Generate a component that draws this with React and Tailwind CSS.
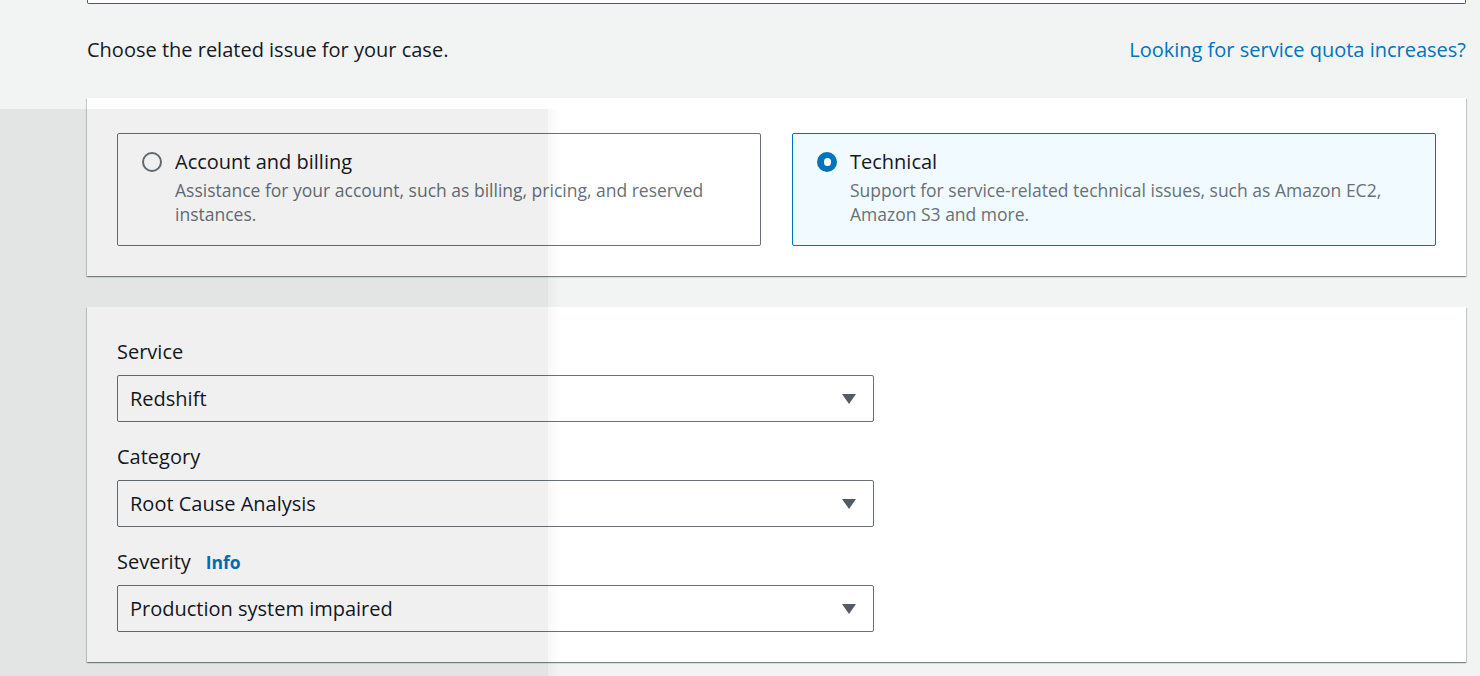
import React, { useState } from 'react';

const fontStack = { fontFamily: '"Open Sans", "Noto Sans", Arial, sans-serif' };

const Arrow = () => (
  <svg width="16" height="12" viewBox="0 0 16 12" className="shrink-0">
    <path d="M1 1 L15 1 L8 11 Z" fill="#545b64" />
  </svg>
);

const SelectBox = ({ value }) => (
  <div className="flex items-center justify-between w-[757px] h-[47px] border border-[#687078] rounded-[2px] bg-white pl-[12px] pr-[16px]">
    <span className="text-[20px] text-[#16191f]">{value}</span>
    <Arrow />
  </div>
);

const Tile = ({ checked, title, desc, onClick }) => (
  <div
    onClick={onClick}
    className={
      checked
        ? "flex-1 border border-[#0073bb] bg-[#f1faff] rounded-[2px] px-[24px] pt-[16px] pb-[19px] cursor-pointer"
        : "flex-1 border border-[#687078] bg-white rounded-[2px] px-[24px] pt-[16px] pb-[19px] cursor-pointer"
    }
  >
    <div className="flex gap-[13px]">
      <div className="h-[24px] flex items-center">
        {checked ? (
          <div className="w-[20px] h-[20px] rounded-full bg-[#0073bb] flex items-center justify-center">
            <div className="w-[7px] h-[8px] rounded-full bg-white"></div>
          </div>
        ) : (
          <div className="w-[20px] h-[20px] rounded-full border-2 border-[#687078] bg-white"></div>
        )}
      </div>
      <div>
        <div className="text-[20px] leading-[24px] text-[#16191f]">{title}</div>
        <div className="mt-[4px] text-[17.5px] leading-[24px] text-[#687078]">{desc}</div>
      </div>
    </div>
  </div>
);

const App = () => {
  const [issue, setIssue] = useState("technical");

  return (
    <div className="relative min-h-[676px] bg-[#f2f3f3] overflow-hidden" style={fontStack}>
      <div className="pl-[87px] pr-[14px]">
        {/* bottom edge of the field above */}
        <div className="h-[4px] border border-t-0 border-[#0073bb] rounded-b-[2px] bg-white"></div>

        <div className="flex items-center justify-between h-[46px] mt-[23px]">
          <span className="text-[20px] text-[#16191f]">Choose the related issue for your case.</span>
          <a href="#" className="text-[20px] text-[#0073bb]">Looking for service quota increases?</a>
        </div>

        <div className="mt-[25px] bg-white shadow-[0_1px_1px_0_rgba(0,28,36,0.3),1px_1px_1px_0_rgba(0,28,36,0.15),-1px_1px_1px_0_rgba(0,28,36,0.15)] px-[30px] pt-[35px] pb-[30px]">
          <div className="flex gap-[31px]">
            <Tile
              checked={issue === "account"}
              onClick={() => setIssue("account")}
              title="Account and billing"
              desc="Assistance for your account, such as billing, pricing, and reserved instances."
            />
            <Tile
              checked={issue === "technical"}
              onClick={() => setIssue("technical")}
              title="Technical"
              desc="Support for service-related technical issues, such as Amazon EC2, Amazon S3 and more."
            />
          </div>
        </div>

        <div className="mt-[31px] bg-white shadow-[0_1px_1px_0_rgba(0,28,36,0.3),1px_1px_1px_0_rgba(0,28,36,0.15),-1px_1px_1px_0_rgba(0,28,36,0.15)] px-[30px] pt-[33px] pb-[30px]">
          <div className="text-[20px] leading-[24px] text-[#16191f]">Service</div>
          <div className="mt-[11px]">
            <SelectBox value="Redshift" />
          </div>
          <div className="mt-[23px] text-[20px] leading-[24px] text-[#16191f]">Category</div>
          <div className="mt-[11px]">
            <SelectBox value="Root Cause Analysis" />
          </div>
          <div className="mt-[23px] flex items-baseline gap-[15px] leading-[24px]">
            <span className="text-[20px] text-[#16191f]">Severity</span>
            <a href="#" className="text-[17.5px] font-bold text-[#0073bb]">Info</a>
          </div>
          <div className="mt-[11px]">
            <SelectBox value="Production system impaired" />
          </div>
        </div>
      </div>

      {/* translucent overlay from the screenshot */}
      <div className="absolute left-0 top-[109px] bottom-0 w-[548px] bg-black/[0.06] pointer-events-none"></div>
      <div className="absolute left-[548px] top-[109px] bottom-0 w-[12px] bg-gradient-to-r from-black/[0.03] to-transparent pointer-events-none"></div>
    </div>
  );
};

export default App;
